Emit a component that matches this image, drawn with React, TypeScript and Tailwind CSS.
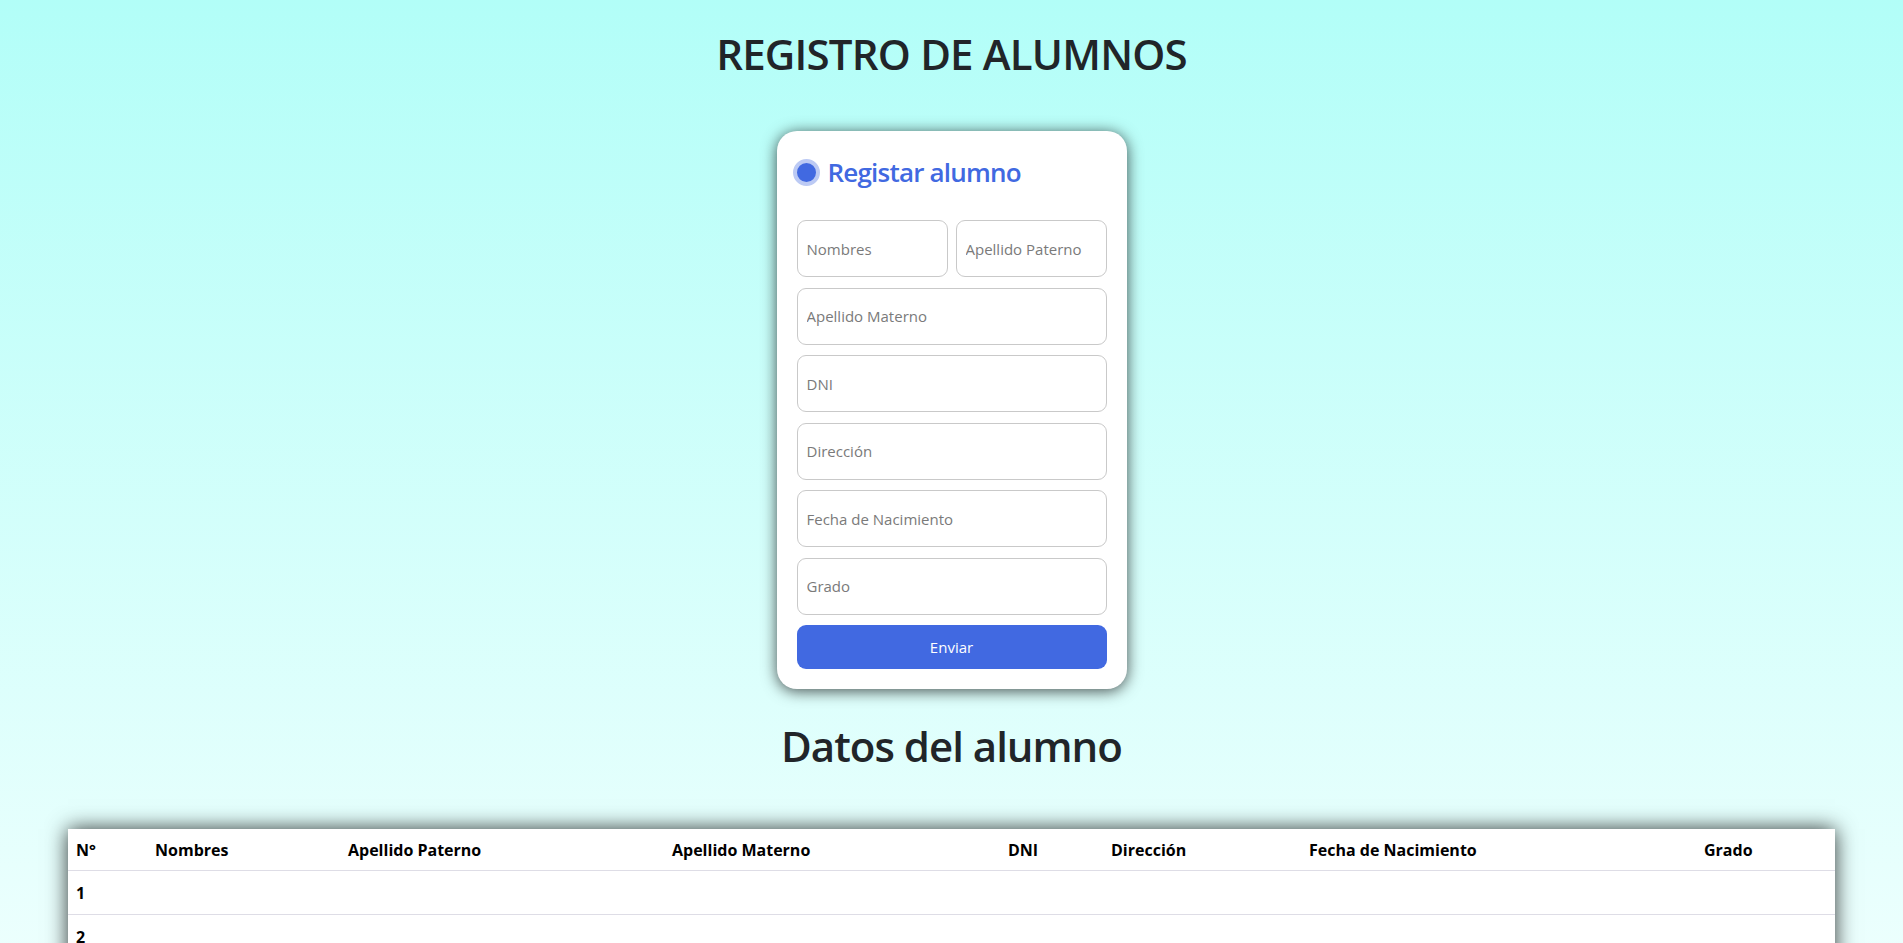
import React from "react";

const campos = ["Apellido Materno", "DNI", "Dirección", "Fecha de Nacimiento", "Grado"];

const columnas = [
  { label: "N°", w: "w-[79px]" },
  { label: "Nombres", w: "w-[193px]" },
  { label: "Apellido Paterno", w: "w-[324px]" },
  { label: "Apellido Materno", w: "w-[336px]" },
  { label: "DNI", w: "w-[103px]" },
  { label: "Dirección", w: "w-[198px]" },
  { label: "Fecha de Nacimiento", w: "w-[395px]" },
  { label: "Grado", w: "w-[139px]" },
];

const filas = [1, 2, 3];

function Campo({ placeholder }: { placeholder: string }) {
  return (
    <input
      type="text"
      placeholder={placeholder}
      className="h-[57px] w-full rounded-[9px] border border-[#c9c9c9] bg-white px-[9px] text-[15px] text-[#333] placeholder:text-[#7a7a7a] outline-none"
    />
  );
}

export default function App() {
  return (
    <div className="min-h-screen bg-gradient-to-b from-[#b2fef8] to-[#f1fffe] pb-10 font-['Open_Sans',sans-serif] text-[#212529]">
      <h1 className="pt-[29px] text-center text-[42px] font-semibold leading-[1.2] tracking-[-0.8px]">REGISTRO DE ALUMNOS</h1>

      <div className="mt-[52px] flex justify-center">
        <form className="w-[350px] rounded-[20px] bg-white p-5 shadow-[0_2px_15px_rgba(0,0,0,0.7)]">
          <div className="mb-[31px] mt-1 flex items-center gap-2 leading-[34px]">
            <span className="ml-[-4px] h-[27px] w-[27px] rounded-full border-[4.5px] border-[#bccaf4] bg-[#4169e1]" />
            <span className="text-[26px] font-semibold tracking-[-0.8px] text-[#4169e1]">Registar alumno</span>
          </div>
          <div className="flex flex-col gap-[10.5px]">
            <div className="grid grid-cols-2 gap-2">
              <Campo placeholder="Nombres" />
              <Campo placeholder="Apellido Paterno" />
            </div>
            {campos.map((c) => (
              <Campo key={c} placeholder={c} />
            ))}
            <button
              type="button"
              className="h-[44px] w-full rounded-[9px] bg-[#4169e1] text-[15px] text-white"
            >
              Enviar
            </button>
          </div>
        </form>
      </div>

      <h2 className="mt-[32px] text-center text-[42px] font-semibold leading-[1.2] tracking-[-1px]">Datos del alumno</h2>

      <div className="mt-[57px] flex justify-center">
        <table className="w-[1767px] table-fixed border-collapse bg-white text-left text-[16px] font-bold text-black shadow-[0_0_20px_rgba(0,0,0,0.8)]">
          <thead>
            <tr className="h-[42px] border-b border-[#dedde6]">
              {columnas.map((c) => (
                <th key={c.label} className={`${c.w} px-2 font-bold`}>
                  {c.label}
                </th>
              ))}
            </tr>
          </thead>
          <tbody>
            {filas.map((n) => (
              <tr key={n} className="h-[44px] border-b border-[#dedde6]">
                <td className="px-2">{n}</td>
                <td className="px-2"></td>
                <td className="px-2"></td>
                <td className="px-2"></td>
                <td className="px-2"></td>
                <td className="px-2"></td>
                <td className="px-2"></td>
                <td className="px-2"></td>
              </tr>
            ))}
          </tbody>
        </table>
      </div>
    </div>
  );
}
